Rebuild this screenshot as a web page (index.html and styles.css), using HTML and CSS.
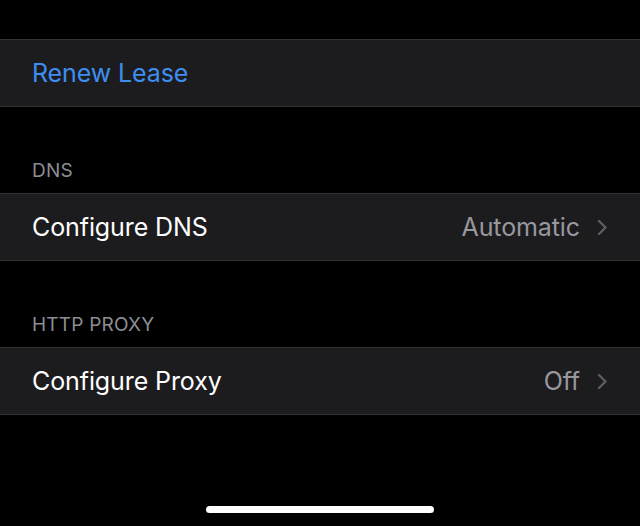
FILE: index.html
```html
<!DOCTYPE html>
<html lang="en">
<head>
    <meta charset="UTF-8">
    <meta name="viewport" content="width=device-width, initial-scale=1.0">
    <title>Wi-Fi</title>
    <link rel="stylesheet" href="styles.css">
</head>
<body>
    <div class="screen">
        <div class="top-space"></div>

        <div class="group">
            <div class="row">
                <span class="row-label link">Renew Lease</span>
            </div>
        </div>

        <div class="section-header">DNS</div>
        <div class="group">
            <div class="row">
                <span class="row-label">Configure DNS</span>
                <span class="row-value">Automatic</span>
                <svg class="chevron" width="11" height="17" viewBox="0 0 11 17">
                    <path d="M2 2 L8.5 8.5 L2 15" fill="none" stroke="currentColor" stroke-width="2.4" stroke-linecap="round" stroke-linejoin="round"/>
                </svg>
            </div>
        </div>

        <div class="section-header">HTTP PROXY</div>
        <div class="group">
            <div class="row">
                <span class="row-label">Configure Proxy</span>
                <span class="row-value">Off</span>
                <svg class="chevron" width="11" height="17" viewBox="0 0 11 17">
                    <path d="M2 2 L8.5 8.5 L2 15" fill="none" stroke="currentColor" stroke-width="2.4" stroke-linecap="round" stroke-linejoin="round"/>
                </svg>
            </div>
        </div>

        <div class="home-indicator"></div>
    </div>
</body>
</html>
```

FILE: styles.css
```css
* {
    box-sizing: border-box;
}

html,
body {
    margin: 0;
    background: #000;
}

body {
    font-family: Inter, "Noto Sans", sans-serif;
    color: #fff;
}

.screen {
    height: 526px;
    display: flex;
    flex-direction: column;
    overflow: hidden;
}

.top-space {
    height: 39px;
    flex-shrink: 0;
}

.group {
    background: #1c1c1e;
    border-top: 1px solid #333336;
    border-bottom: 1px solid #333336;
    flex-shrink: 0;
}

.row {
    height: 66px;
    display: flex;
    align-items: center;
    padding: 0 32px;
}

.row-label {
    font-size: 25px;
    letter-spacing: -0.1px;
    flex: 1;
}

.link {
    color: #3e8ef0;
}

.row-value {
    font-size: 25px;
    letter-spacing: -0.1px;
    color: #98989e;
    margin-right: 17px;
}

.chevron {
    color: #5c5c61;
    margin-top: 1px;
}

.section-header {
    height: 86px;
    flex-shrink: 0;
    display: flex;
    align-items: flex-end;
    padding: 0 32px 11px;
    font-size: 19px;
    color: #8d8d93;
    letter-spacing: 0.2px;
}

.home-indicator {
    margin: auto auto 13px;
    width: 228px;
    height: 7px;
    border-radius: 4px;
    background: #fff;
    flex-shrink: 0;
}
```
